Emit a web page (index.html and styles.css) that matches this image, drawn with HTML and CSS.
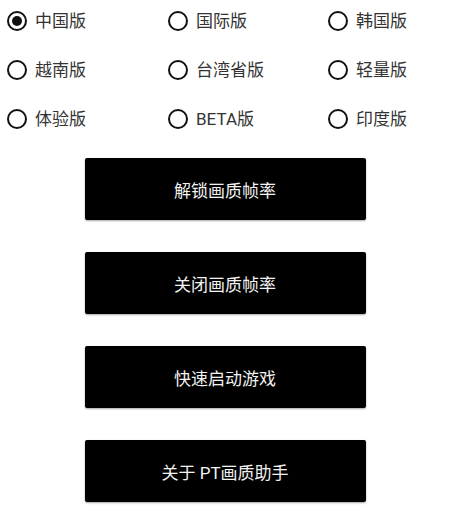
FILE: index.html
```html
<!DOCTYPE html>
<html lang="zh-CN">
<head>
<meta charset="utf-8">
<link rel="stylesheet" href="styles.css">
</head>
<body>
<div class="options">
  <label class="option"><span class="radio checked"></span><span class="label">中国版</span></label>
  <label class="option"><span class="radio"></span><span class="label">国际版</span></label>
  <label class="option"><span class="radio"></span><span class="label">韩国版</span></label>
  <label class="option"><span class="radio"></span><span class="label">越南版</span></label>
  <label class="option"><span class="radio"></span><span class="label">台湾省版</span></label>
  <label class="option"><span class="radio"></span><span class="label">轻量版</span></label>
  <label class="option"><span class="radio"></span><span class="label">体验版</span></label>
  <label class="option"><span class="radio"></span><span class="label">BETA版</span></label>
  <label class="option"><span class="radio"></span><span class="label">印度版</span></label>
</div>
<div class="actions">
  <button class="action">解锁画质帧率</button>
  <button class="action">关闭画质帧率</button>
  <button class="action">快速启动游戏</button>
  <button class="action">关于 PT画质助手</button>
</div>
</body>
</html>
```
FILE: styles.css
```css
html, body {
  margin: 0;
  padding: 0;
  background: #ffffff;
}
body {
  width: 450px;
  height: 526px;
  overflow: hidden;
  font-family: Roboto, "Noto Sans CJK SC", sans-serif;
}
.options {
  display: grid;
  grid-template-columns: 161px 160px 129px;
  grid-auto-rows: 41px;
  row-gap: 8px;
  padding-left: 7px;
}
.option {
  display: flex;
  align-items: center;
  gap: 8px;
}
.radio {
  width: 20px;
  height: 20px;
  box-sizing: border-box;
  border: 2.5px solid #111;
  border-radius: 50%;
  display: flex;
  align-items: center;
  justify-content: center;
  flex: none;
}
.radio.checked::after {
  content: "";
  width: 10px;
  height: 10px;
  border-radius: 50%;
  background: #111;
}
.label {
  font-size: 17px;
  color: #333;
  line-height: 20px;
}
.actions {
  display: flex;
  flex-direction: column;
  align-items: center;
  gap: 32px;
  margin-top: 19px;
}
.action {
  width: 281px;
  height: 62px;
  background: #000;
  color: #f2f2f2;
  border: none;
  border-radius: 2px;
  box-shadow: 0 1px 2px rgba(0, 0, 0, 0.35);
  font-family: Roboto, "Noto Sans CJK SC", sans-serif;
  font-size: 17px;
  padding: 0;
}
```
